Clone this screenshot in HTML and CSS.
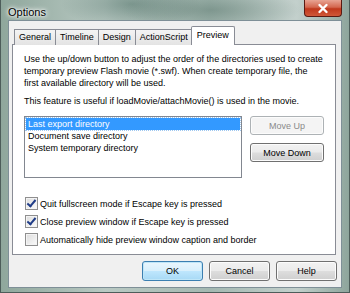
FILE: index.html
```html
<!DOCTYPE html>
<html lang="en">
<head>
    <meta charset="UTF-8">
    <title>Options</title>
    <link rel="stylesheet" href="styles.css">
</head>
<body>
    <div class="window">
        <div class="titlebar">
            <span class="title">Options</span>
            <div class="close-button">
                <svg width="14" height="11" viewBox="0 0 14 11">
                    <path d="M3.5 2 L10.5 9 M10.5 2 L3.5 9" stroke="#fff" stroke-width="2.4" stroke-linecap="round"/>
                </svg>
            </div>
        </div>

        <div class="client">
            <div class="tabs">
                <div class="tab">General</div>
                <div class="tab">Timeline</div>
                <div class="tab">Design</div>
                <div class="tab">ActionScript</div>
                <div class="tab selected">Preview</div>
            </div>

            <div class="panel">
                <p class="info">Use the up/down button to adjust the order of the directories used to create temporary preview Flash movie (*.swf). When create temporary file, the first available directory will be used.</p>
                <p class="info">This feature is useful if loadMovie/attachMovie() is used in the movie.</p>

                <div class="list-row">
                    <div class="listbox">
                        <div class="list-item selected">Last export directory</div>
                        <div class="list-item">Document save directory</div>
                        <div class="list-item">System temporary directory</div>
                    </div>
                    <div class="side-buttons">
                        <button class="button" disabled>Move Up</button>
                        <button class="button">Move Down</button>
                    </div>
                </div>

                <div class="checks">
                    <label class="check"><span class="box checked"></span>Quit fullscreen mode if Escape key is pressed</label>
                    <label class="check"><span class="box checked"></span>Close preview window if Escape key is pressed</label>
                    <label class="check"><span class="box"></span>Automatically hide preview window caption and border</label>
                </div>
            </div>

            <div class="footer">
                <button class="button default">OK</button>
                <button class="button">Cancel</button>
                <button class="button">Help</button>
            </div>
        </div>
    </div>
</body>
</html>
```

FILE: styles.css
```css
body {
    margin: 0;
    font-family: "Liberation Sans", Arial, sans-serif;
    font-size: 9px;
    color: #000;
    overflow: hidden;
}

.window {
    width: 350px;
    height: 293px;
    box-sizing: border-box;
    display: flex;
    flex-direction: column;
    padding: 0 7px 4px 7px;
    background:
        radial-gradient(ellipse 90px 20px at 210px 10px, rgba(80, 110, 100, 0.45), transparent),
        radial-gradient(ellipse 70px 25px at 130px 4px, rgba(70, 105, 95, 0.5), transparent),
        linear-gradient(90deg, #8fa79c 0%, #b9c9c3 30%, #a4b8b1 60%, #c3d0cc 85%, #8ea59c 100%);
    border: 1px solid #4d5d5a;
    border-top: none;
}

.titlebar {
    height: 22px;
    display: flex;
    justify-content: space-between;
    align-items: flex-start;
}

.title {
    margin-top: 6px;
    font-size: 11px;
    text-shadow: 0 0 6px #fff, 0 0 4px #fff, 0 0 2px #fff;
}

.close-button {
    width: 38px;
    height: 17px;
    display: flex;
    align-items: center;
    justify-content: center;
    border: 1px solid #5a1a12;
    border-top: none;
    border-radius: 0 0 4px 4px;
    background: linear-gradient(#e8a493 0%, #d4674f 45%, #c0381c 55%, #d05838 100%);
    box-sizing: border-box;
}

.client {
    flex-grow: 1;
    background: #f0f0f0;
    border: 1px solid #7e8f97;
    display: flex;
    flex-direction: column;
    padding: 6px 5px 6px 3px;
}

.tabs {
    display: flex;
    align-items: flex-end;
    padding-left: 2px;
    height: 18px;
    position: relative;
    z-index: 1;
    margin-bottom: -1px;
}

.tab {
    height: 15px;
    line-height: 15px;
    padding: 0 4px;
    border: 1px solid #898c95;
    border-bottom: none;
    margin-right: -1px;
    background: linear-gradient(#f4f4f4, #e3e3e3);
}

.tab.selected {
    height: 18px;
    line-height: 16px;
    background: #fff;
    margin-left: -1px;
    padding: 0 5px;
    border-radius: 2px 2px 0 0;
}

.panel {
    background: #fff;
    border: 1px solid #898c95;
    height: 211px;
    box-sizing: border-box;
    padding: 8px 11px 0 11px;
}

.info {
    margin: 0 0 6px 0;
    line-height: 12px;
}

.list-row {
    display: flex;
    gap: 8px;
    margin-top: 9px;
}

.listbox {
    width: 221px;
    height: 62px;
    box-sizing: border-box;
    border: 1px solid #828790;
    padding: 1px;
}

.list-item {
    height: 12px;
    line-height: 12px;
    padding-left: 2px;
}

.list-item.selected {
    background: #3399ff;
    color: #fff;
    outline: 1px dotted #a0c8f0;
}

.side-buttons {
    display: flex;
    flex-direction: column;
    gap: 8px;
}

.button {
    font-family: inherit;
    font-size: 9px;
    color: #000;
    width: 74px;
    height: 19px;
    padding: 0;
    border: 1px solid #707070;
    border-radius: 3px;
    background: linear-gradient(#f2f2f2 0%, #ebebeb 48%, #dddddd 52%, #cfcfcf 100%);
    box-shadow: inset 0 0 0 1px #fcfcfc;
}

.button:disabled {
    color: #8a8a8a;
    border-color: #adb2b5;
    background: #f4f4f4;
}

.checks {
    margin-top: 19px;
    display: flex;
    flex-direction: column;
    gap: 5px;
}

.check {
    display: flex;
    align-items: center;
    height: 13px;
    gap: 2px;
    margin-left: 1px;
}

.box {
    width: 11px;
    height: 11px;
    border: 1px solid #8f8f8f;
    background: linear-gradient(135deg, #dcdcdc, #fbfbfb);
    box-shadow: inset 0 0 0 1px #f4f4f4;
    position: relative;
}

.box.checked::after {
    content: "";
    position: absolute;
    left: 3px;
    top: 0;
    width: 3px;
    height: 7px;
    border: solid #1f3c87;
    border-width: 0 2px 2px 0;
    transform: rotate(40deg);
}

.footer {
    display: flex;
    justify-content: flex-end;
    gap: 6px;
    margin-top: 6px;
    margin-right: -1px;
}

.footer .button {
    width: 61px;
    height: 20px;
}

.button.default {
    border-color: #3c7fb1;
    box-shadow: inset 0 0 0 1px #bfe6f8;
    background: linear-gradient(#eaf6fd 0%, #d9f0fc 48%, #bee6fd 52%, #a7d9f5 100%);
}
```
